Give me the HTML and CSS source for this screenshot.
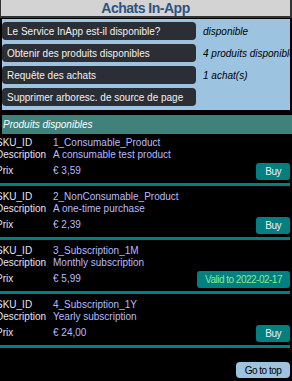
FILE: index.html
```html
<!DOCTYPE html>
<html lang="fr">

<head>
    <meta charset="utf-8">
    <title>Achats In-App</title>
    <link rel="stylesheet" href="styles.css">
</head>

<body>
    <div class="header">Achats In-App</div>

    <div class="panel">
        <div class="action">
            <button class="actionButton">Le Service InApp est-il disponible?</button>
            <span class="status">disponible</span>
        </div>
        <div class="action">
            <button class="actionButton">Obtenir des produits disponibles</button>
            <span class="status">4 produits disponibles</span>
        </div>
        <div class="action">
            <button class="actionButton">Requête des achats</button>
            <span class="status">1 achat(s)</span>
        </div>
        <div class="action">
            <button class="actionButton">Supprimer arboresc. de source de page</button>
            <span class="status"></span>
        </div>
    </div>

    <div class="listTitle">Produits disponibles</div>

    <div class="products">
        <div class="product first">
            <span class="label">SKU_ID</span><span class="value">1_Consumable_Product</span>
            <span class="label">Description</span><span class="value">A consumable test product</span>
            <span class="label price">Prix</span>
            <span class="value price">€ 3,59 <button class="buy">Buy</button></span>
        </div>
        <div class="product">
            <span class="label">SKU_ID</span><span class="value">2_NonConsumable_Product</span>
            <span class="label">Description</span><span class="value">A one-time purchase</span>
            <span class="label price">Prix</span>
            <span class="value price">€ 2,39 <button class="buy">Buy</button></span>
        </div>
        <div class="product">
            <span class="label">SKU_ID</span><span class="value">3_Subscription_1M</span>
            <span class="label">Description</span><span class="value">Monthly subscription</span>
            <span class="label price">Prix</span>
            <span class="value price">€ 5,99 <button class="buy valid">Valid to 2022-02-17</button></span>
        </div>
        <div class="product">
            <span class="label">SKU_ID</span><span class="value">4_Subscription_1Y</span>
            <span class="label">Description</span><span class="value">Yearly subscription</span>
            <span class="label price">Prix</span>
            <span class="value price">€ 24,00 <button class="buy">Buy</button></span>
        </div>
    </div>

    <div class="bottom">
        <button class="topButton">Go to top</button>
    </div>
</body>

</html>
```

FILE: styles.css
```css
body {
    margin: 0;
    background-color: black;
    font-family: "Liberation Sans", Arial, sans-serif;
    font-size: 10px;
    width: 292px;
    overflow: hidden;
}
button {
    font-family: "Liberation Sans", Arial, sans-serif;
    font-size: 10px;
    border: none;
    cursor: pointer;
}
.header {
    background-color: #d3d3d3;
    border-left: 1px solid #333;
    border-right: 2px solid #333;
    border-bottom: 2px solid #333;
    height: 16px;
    line-height: 16px;
    text-align: center;
    font-weight: bold;
    font-size: 14px;
    letter-spacing: -0.5px;
    color: #2c5383;
    margin-bottom: 1px;
}
.panel {
    background-color: #9cc3e0;
    border-left: 2px solid black;
    border-right: 2px solid black;
    padding: 3px 0 4px 0;
    margin-bottom: 5px;
}
.action {
    display: grid;
    grid-template-columns: 194px 1fr;
    column-gap: 7px;
    align-items: center;
    margin-bottom: 4px;
}
.action:last-child {
    margin-bottom: 0;
}
.actionButton {
    background-color: #2b2e35;
    color: #f2f2f2;
    height: 18px;
    border-radius: 4px;
    text-align: left;
    padding: 0 5px;
    white-space: nowrap;
}
.status {
    font-style: italic;
    color: black;
    white-space: nowrap;
    overflow: hidden;
}
.listTitle {
    background-color: #3f817b;
    border-left: 2px solid black;
    color: white;
    font-style: italic;
    height: 19px;
    line-height: 19px;
    padding-left: 1px;
}
.product {
    display: grid;
    grid-template-columns: 57px 1fr;
    grid-template-rows: 12px 12px 20px;
    margin-left: -4px;
    margin-right: 2px;
    padding: 5px 0 2px 0;
    border-bottom: 3px solid #008080;
    line-height: 12px;
}
.product.first {
    padding-top: 3px;
}
.label {
    color: #e4e4fb;
}
.value {
    color: #b6bcff;
    white-space: nowrap;
}
.label.price,
.value.price {
    height: 20px;
    line-height: 20px;
}
.value.price {
    display: flex;
    justify-content: space-between;
    align-items: center;
}
.buy {
    background-color: #008080;
    color: #f0f0f0;
    letter-spacing: -0.5px;
    height: 17px;
    border-radius: 3px;
    padding: 0 9px;
}
.buy.valid {
    color: #8de88d;
    padding: 0 8px;
}
.bottom {
    display: flex;
    justify-content: flex-end;
    padding: 14px 2px 0 0;
}
.topButton {
    background-color: #9cc3e0;
    color: black;
    letter-spacing: -0.5px;
    height: 16px;
    width: 54px;
    border-radius: 4px;
    padding: 0;
}
```
